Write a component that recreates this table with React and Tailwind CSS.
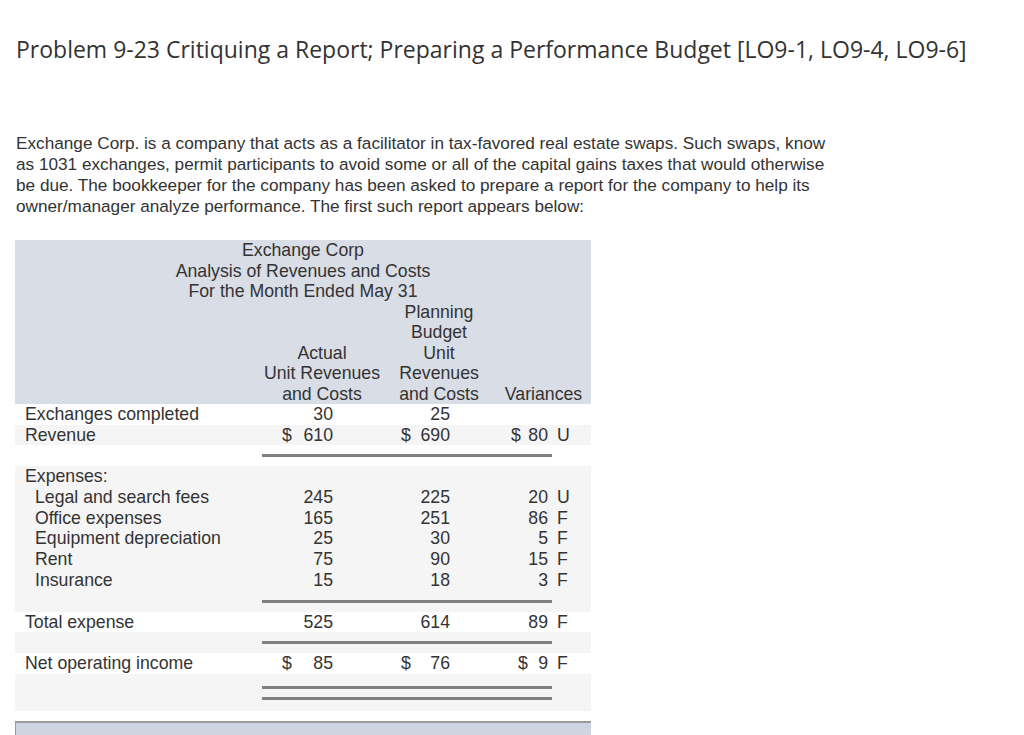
import React from 'react';

const expenses = [
  { label: 'Legal and search fees', actual: '245', budget: '225', variance: '20', flag: 'U' },
  { label: 'Office expenses', actual: '165', budget: '251', variance: '86', flag: 'F' },
  { label: 'Equipment depreciation', actual: '25', budget: '30', variance: '5', flag: 'F' },
  { label: 'Rent', actual: '75', budget: '90', variance: '15', flag: 'F' },
  { label: 'Insurance', actual: '15', budget: '18', variance: '3', flag: 'F' },
];

function Row({ label, indent, actual, budget, variance, flag, bg = 'bg-white', dA, dB, dV }) {
  return (
    <div className={`flex h-[20.7px] leading-[20.7px] ${bg}`}>
      <div className={`w-[247px] ${indent ? 'pl-[20px]' : 'pl-[10px]'}`}>{label}</div>
      <div className="w-[120px] flex justify-between pl-[20px] pr-[49px]">
        <span>{dA ? '$' : ''}</span>
        <span>{actual}</span>
      </div>
      <div className="w-[114px] flex justify-between pl-[19px] pr-[46px]">
        <span>{dB ? '$' : ''}</span>
        <span>{budget}</span>
      </div>
      <div className={`w-[56px] flex justify-between pr-[4px] ${dV === 'tight' ? 'pl-[15px]' : 'pl-[22px]'}`}>
        <span>{dV ? '$' : ''}</span>
        <span>{variance}</span>
      </div>
      <div className="pl-[5px]">{flag}</div>
    </div>
  );
}

function Rule({ bg = 'bg-white', double }) {
  return (
    <div className={`flex ${bg} ${double ? 'h-[37px] pt-[12px]' : 'h-[21px] items-center'}`}>
      <div className="w-[247px]" />
      <div className="w-[290px] flex flex-col gap-[8px]">
        <div className="h-[3px] bg-[#808080]" />
        {double && <div className="h-[3px] bg-[#808080]" />}
      </div>
    </div>
  );
}

export default function App() {
  return (
    <div className="min-h-[735px] bg-white text-[#333] pl-[16px] pt-[33px] font-['Liberation_Sans',Arial,sans-serif]">
      <h1 className="font-['Open_Sans','Lato',sans-serif] text-[23px] leading-[32px] text-[#333]">
        Problem 9-23 Critiquing a Report; Preparing a Performance Budget [LO9-1, LO9-4, LO9-6]
      </h1>

      <p className="mt-[68px] text-[17.2px] leading-[21px]">
        Exchange Corp. is a company that acts as a facilitator in tax-favored real estate swaps. Such swaps, know
        <br />
        as 1031 exchanges, permit participants to avoid some or all of the capital gains taxes that would otherwise
        <br />
        be due. The bookkeeper for the company has been asked to prepare a report for the company to help its
        <br />
        owner/manager analyze performance. The first such report appears below:
      </p>

      <div className="mt-[23px] -ml-[1px] w-[576px] text-[17.7px]">
        <div className="bg-[#d9dde6] leading-[20.5px] h-[164px]">
          <div className="text-center">Exchange Corp</div>
          <div className="text-center">Analysis of Revenues and Costs</div>
          <div className="text-center">For the Month Ended May 31</div>
          <div className="flex items-end">
            <div className="w-[247px]" />
            <div className="w-[120px] text-center">
              Actual<br />Unit Revenues<br />and Costs
            </div>
            <div className="w-[114px] text-center">
              Planning<br />Budget<br />Unit<br />Revenues<br />and Costs
            </div>
            <div className="w-[95px] text-center">Variances</div>
          </div>
        </div>

        <Row label="Exchanges completed" actual="30" budget="25" />
        <Row label="Revenue" actual="610" budget="690" variance="80" flag="U" dA dB dV="tight" bg="bg-[#f5f5f5]" />
        <Rule />

        <div className="bg-[#f5f5f5]">
          <Row label="Expenses:" bg="bg-[#f5f5f5]" />
          {expenses.map((e) => (
            <Row key={e.label} indent bg="bg-[#f5f5f5]" {...e} />
          ))}
        </div>
        <Rule bg="bg-[#f5f5f5]" />
        <Row label="Total expense" actual="525" budget="614" variance="89" flag="F" />
        <Rule bg="bg-[#f5f5f5]" />
        <Row label="Net operating income" actual="85" budget="76" variance="9" flag="F" dA dB dV />
        <Rule bg="bg-[#f5f5f5]" double />

        <div className="mt-[10px] h-[20px] bg-[#cfd5e0] border-t-2 border-l border-[#9a9a9a]" />
      </div>
    </div>
  );
}
